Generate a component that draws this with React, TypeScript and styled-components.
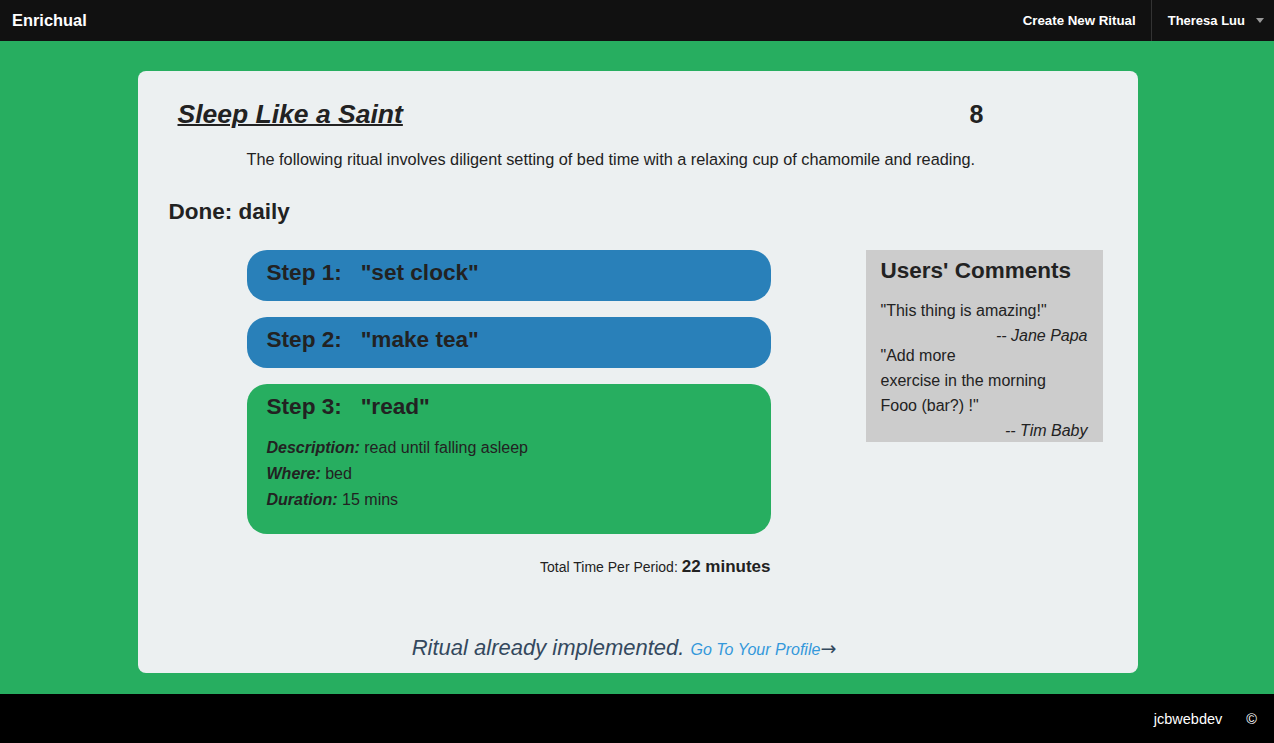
import styled, { createGlobalStyle } from "styled-components";

const GlobalStyle = createGlobalStyle`
  html, body {
    margin: 0;
    padding: 0;
    background: #27ae60;
    font-family: "Liberation Sans", Arial, sans-serif;
    color: #222;
  }
`;

const Page = styled.div`
  min-height: 743px;
  display: flex;
  flex-direction: column;
`;

const NavBar = styled.header`
  height: 41px;
  background: #111;
  display: flex;
  justify-content: space-between;
  align-items: stretch;

  .brand {
    color: #fff;
    font-weight: bold;
    font-size: 16.4px;
    padding-left: 12px;
    display: flex;
    align-items: center;
  }

  .nav {
    display: flex;
    align-items: stretch;
  }

  .item {
    color: #fff;
    font-weight: bold;
    font-size: 13.3px;
    display: flex;
    align-items: center;
    padding: 0 15px;
  }

  .item.last {
    font-size: 13px;
    padding: 0 10px 0 16px;
  }

  .divider {
    width: 1px;
    background: #333;
  }

  .caret {
    width: 0;
    height: 0;
    border-left: 4px solid transparent;
    border-right: 4px solid transparent;
    border-top: 5px solid #999;
    margin-left: 11px;
  }
`;

const Main = styled.main`
  flex: 1;
  padding: 30px 0 21px 1px;
  display: flex;
  justify-content: center;
`;

const Card = styled.section`
  width: 1000px;
  height: 602px;
  box-sizing: border-box;
  background: #ecf0f1;
  border-radius: 8px;
  padding: 23px 0 0 31px;
  display: flex;
  flex-direction: column;
`;

const Header = styled.div`
  display: flex;
  align-items: center;
  height: 40px;
  padding-left: 9px;

  h1 {
    margin: 0;
    width: 792px;
    font-size: 26.5px;
    font-style: italic;
    font-weight: bold;
    text-decoration: underline;
    text-decoration-thickness: 2px;
  }

  .score {
    font-size: 25px;
    font-weight: bold;
  }
`;

const Description = styled.p`
  margin: 15px 0 0 78px;
  font-size: 16.3px;
  line-height: 20px;
`;

const Done = styled.h3`
  margin: 30px 0 0;
  font-size: 22.5px;
  line-height: 26px;
  font-weight: bold;
`;

const Body = styled.div`
  display: flex;
  margin: 25px 0 0 78px;
  gap: 95px;
`;

const Steps = styled.div`
  width: 524px;
  display: flex;
  flex-direction: column;
  gap: 16px;
`;

const Step = styled.div<{ $tone: "blue" | "green" }>`
  background: ${(p) => (p.$tone === "blue" ? "#2980b9" : "#27ae60")};
  border-radius: 20px;
  padding: 6px 20px ${(p) => (p.$tone === "blue" ? "11px" : "21px")};

  h4 {
    margin: 0;
    font-size: 22.6px;
    line-height: 34px;
    font-weight: bold;
    white-space: pre;
  }

  p {
    margin: 0;
    font-size: 16px;
    line-height: 26px;
  }

  .details {
    margin-top: 11px;
  }

  b {
    font-style: italic;
  }
`;

const Total = styled.div`
  text-align: right;
  font-size: 14px;
  margin-top: 7px;

  strong {
    font-size: 17px;
  }
`;

const Comments = styled.aside`
  width: 237px;
  height: 192px;
  box-sizing: border-box;
  background: #cccccc;
  padding: 7px 15px 0;

  h3 {
    margin: 0 0 13px;
    font-size: 22.5px;
    line-height: 28px;
    font-weight: bold;
  }

  p {
    margin: 0;
    font-size: 16px;
    line-height: 25px;
  }

  .by {
    text-align: right;
    font-style: italic;
    margin-bottom: -5px;
  }
`;

const Implemented = styled.div`
  margin-top: auto;
  padding: 0 27px 12px 0;
  text-align: center;
  margin-left: -31px;
  color: #34495e;
  font-style: italic;
  font-size: 22px;

  a {
    color: #3498db;
    font-size: 16px;
    text-decoration: none;
  }

  .arrow {
    color: #34495e;
    font-style: normal;
    font-size: 19px;
    font-family: "DejaVu Sans", sans-serif;
  }
`;

const Footer = styled.footer`
  height: 49px;
  background: #000;
  color: #fff;
  display: flex;
  justify-content: flex-end;
  align-items: center;
  font-size: 14.5px;
  padding-right: 17px;
  gap: 24px;
`;

export default function App() {
  return (
    <Page>
      <GlobalStyle />
      <NavBar>
        <div className="brand">Enrichual</div>
        <nav className="nav">
          <div className="item">Create New Ritual</div>
          <div className="divider" />
          <div className="item last">
            Theresa Luu<span className="caret" />
          </div>
        </nav>
      </NavBar>
      <Main>
        <Card>
          <Header>
            <h1>Sleep Like a Saint</h1>
            <div className="score">8</div>
          </Header>
          <Description>
            The following ritual involves diligent setting of bed time with a
            relaxing cup of chamomile and reading.
          </Description>
          <Done>Done: daily</Done>
          <Body>
            <Steps>
              <Step $tone="blue">
                <h4>Step 1:   "set clock"</h4>
              </Step>
              <Step $tone="blue">
                <h4>Step 2:   "make tea"</h4>
              </Step>
              <Step $tone="green">
                <h4>Step 3:   "read"</h4>
                <div className="details">
                  <p>
                    <b>Description:</b> read until falling asleep
                  </p>
                  <p>
                    <b>Where:</b> bed
                  </p>
                  <p>
                    <b>Duration:</b> 15 mins
                  </p>
                </div>
              </Step>
              <Total>
                Total Time Per Period: <strong>22 minutes</strong>
              </Total>
            </Steps>
            <Comments>
              <h3>Users' Comments</h3>
              <p>"This thing is amazing!"</p>
              <p className="by">-- Jane Papa</p>
              <p>"Add more</p>
              <p>exercise in the morning</p>
              <p>Fooo (bar?) !"</p>
              <p className="by">-- Tim Baby</p>
            </Comments>
          </Body>
          <Implemented>
            Ritual already implemented. <a href="#">Go To Your Profile</a>
            <span className="arrow">→</span>
          </Implemented>
        </Card>
      </Main>
      <Footer>
        <span>jcbwebdev</span>
        <span>©</span>
      </Footer>
    </Page>
  );
}
